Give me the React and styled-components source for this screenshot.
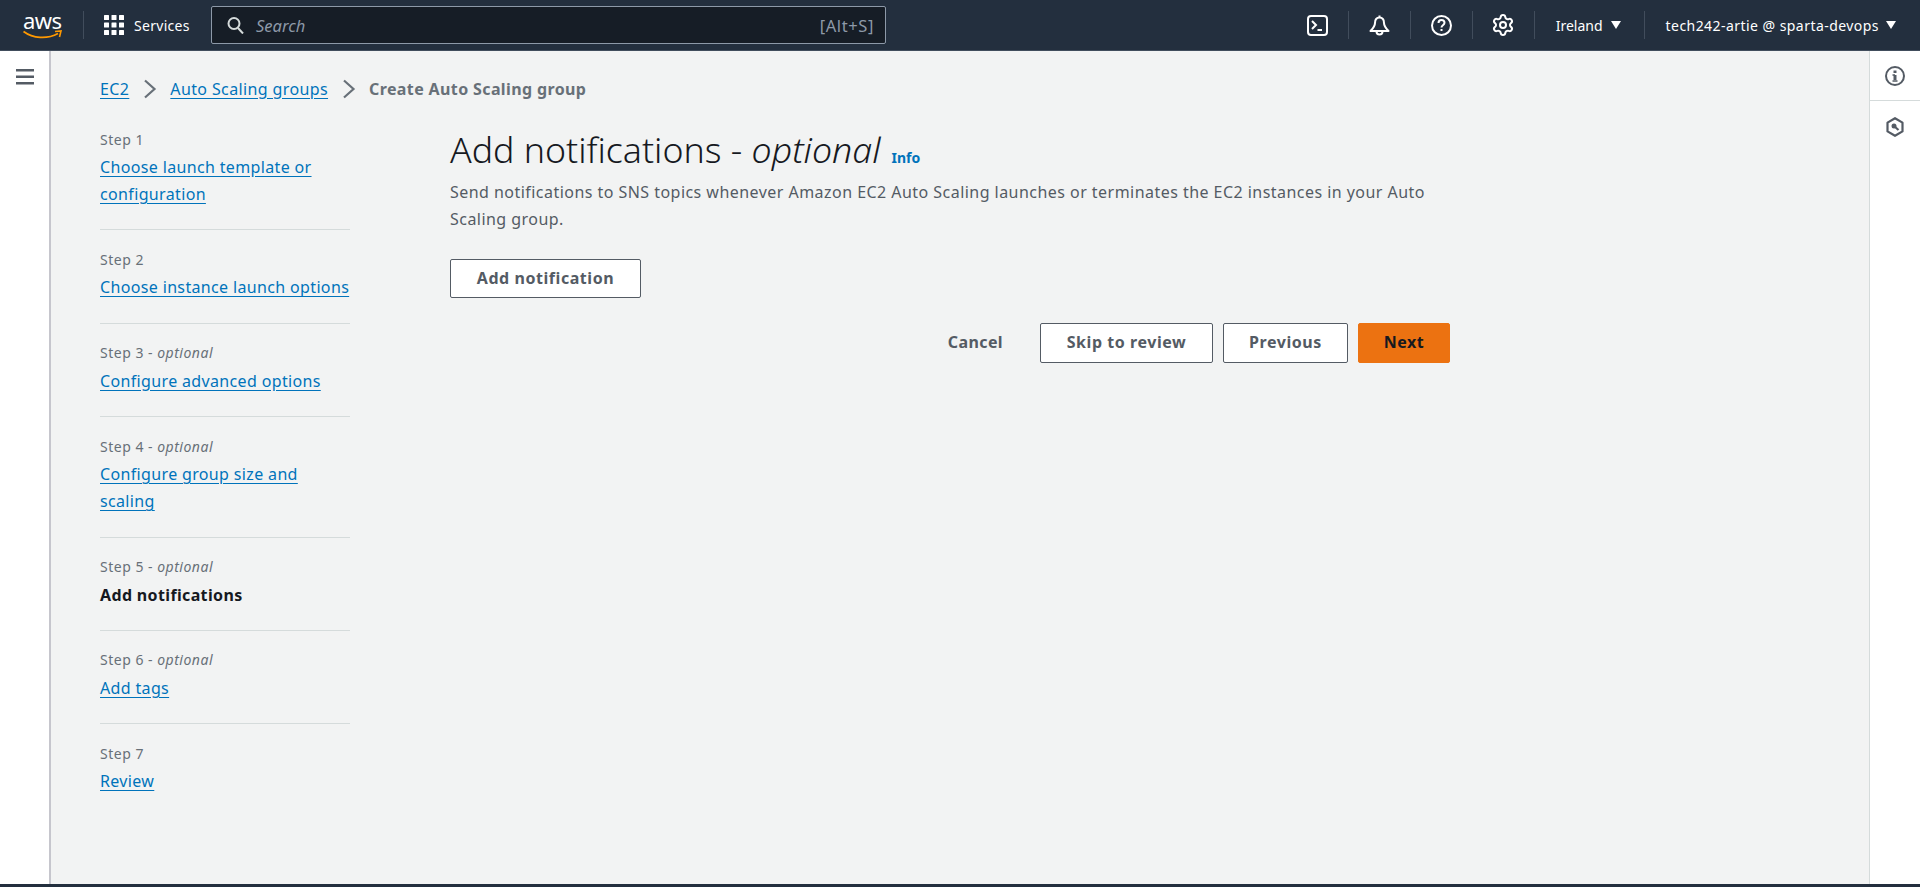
import React from 'react';
import styled, { createGlobalStyle } from 'styled-components';
import { Settings } from 'lucide-react';

const GlobalStyle = createGlobalStyle`
  html, body {
    margin: 0;
    padding: 0;
    height: 100%;
    overflow: hidden;
    background: #f2f3f3;
    font-family: "Noto Sans", "Open Sans", sans-serif;
    font-size: 16px;
  }
  * { box-sizing: border-box; }
`;

const steps = [
  { label: 'Step 1', title: 'Choose launch template or configuration' },
  { label: 'Step 2', title: 'Choose instance launch options' },
  { label: 'Step 3', optional: true, title: 'Configure advanced options' },
  { label: 'Step 4', optional: true, title: 'Configure group size and scaling' },
  { label: 'Step 5', optional: true, title: 'Add notifications', active: true },
  { label: 'Step 6', optional: true, title: 'Add tags' },
  { label: 'Step 7', title: 'Review' },
];

const Page = styled.div`
  display: flex;
  flex-direction: column;
  height: 887px;
`;

const TopBar = styled.header`
  flex: none;
  height: 51px;
  background: #232f3e;
  border-bottom: 1px solid #414d5c;
  display: flex;
  align-items: center;
  color: #fff;
`;

const Logo = styled.div`
  width: 83px;
  padding-left: 23px;
  display: flex;
  flex-direction: column;
  align-items: flex-start;
  height: 34px;
`;

const LogoText = styled.span`
  font-size: 22px;
  line-height: 24px;
  height: 22px;
  letter-spacing: -0.6px;
  color: #fff;
`;

const BarDivider = styled.span`
  flex: none;
  width: 1px;
  height: 28px;
  background: #414d5c;
`;

const ServicesMenu = styled.div`
  display: flex;
  align-items: center;
  gap: 10px;
  padding: 0 21px 0 20px;
  font-size: 14px;
  letter-spacing: 0.3px;
  width: 127px;
`;

const SearchBox = styled.div`
  width: 675px;
  height: 38px;
  background: #161d26;
  border: 1px solid #8d99a8;
  border-radius: 2px;
  display: flex;
  align-items: center;
  padding: 0 11px 0 15px;
  gap: 12px;
`;

const SearchText = styled.span`
  flex: 1;
  font-style: italic;
  font-size: 16.500px;
  color: #8d99a8;
`;

const Shortcut = styled.span`
  font-size: 16.500px;
  letter-spacing: 0.6px;
  color: #8d99a8;
`;

const BarRight = styled.div`
  margin-left: auto;
  display: flex;
  align-items: center;
`;

const IconCell = styled.div`
  width: 61px;
  display: flex;
  justify-content: center;
  align-items: center;
  height: 28px;
`;

const MenuCell = styled.div`
  display: flex;
  align-items: center;
  gap: ${p => p.$gap}px;
  font-size: 14px;
  letter-spacing: ${p => p.$spacing || 0}px;
  padding: 0 ${p => p.$right}px 0 21px;
`;

const Caret = styled.span`
  width: 0;
  height: 0;
  border-left: 5px solid transparent;
  border-right: 5px solid transparent;
  border-top: 8px solid #fff;
`;

const Body = styled.div`
  flex: 1;
  display: flex;
  min-height: 0;
`;

const LeftRail = styled.aside`
  flex: none;
  width: 51px;
  background: #fff;
  border-right: 2px solid #c6c6cd;
  padding: 17px 0 0 16px;
`;

const RightRail = styled.aside`
  flex: none;
  width: 51px;
  background: #fff;
  border-left: 1px solid #d5dbdb;
  display: flex;
  flex-direction: column;
`;

const RailButton = styled.div`
  height: ${p => p.$h}px;
  display: flex;
  align-items: center;
  justify-content: center;
  border-bottom: ${p => (p.$line ? '1px solid #d5dbdb' : 'none')};
`;

const Main = styled.main`
  flex: 1;
  padding: 24px 0 0 49px;
  min-width: 0;
`;

const Breadcrumbs = styled.nav`
  display: flex;
  align-items: center;
  height: 27px;
  font-size: 16px;
  letter-spacing: 0.38px;
`;

const Crumb = styled.a`
  color: #0073bb;
  text-decoration: underline;
  text-underline-offset: 3px;
`;

const CrumbCurrent = styled.span`
  color: #687078;
  font-weight: 700;
`;

const CrumbChevron = styled.svg`
  width: 14px;
  height: 20px;
  margin: 0 13px 0 14px;
  flex: none;
`;

const Columns = styled.div`
  display: grid;
  grid-template-columns: 250px 1000px;
  column-gap: 100px;
  margin-top: 8px;
`;

const StepList = styled.ol`
  list-style: none;
  margin: 0;
  padding: 0;
`;

const StepItem = styled.li`
  padding: 17.500px 0 ${p => (p.$last ? 0 : 21.4)}px;
  border-bottom: ${p => (p.$last ? 'none' : '1px solid #d5dbdb')};
`;

const StepLabel = styled.div`
  font-size: 14px;
  line-height: 24px;
  margin-bottom: 2.500px;
  letter-spacing: 0.5px;
  color: #687078;

  em {
    font-style: italic;
  }
`;

const StepLink = styled.a`
  font-size: 16px;
  line-height: 27px;
  letter-spacing: 0.35px;
  color: #0073bb;
  text-decoration: underline;
  text-underline-offset: 3px;
`;

const StepCurrent = styled.div`
  font-size: 16px;
  line-height: 27px;
  letter-spacing: 0.35px;
  font-weight: 700;
  color: #16191f;
`;

const Content = styled.section`
  padding-top: 18px;
`;

const HeadingRow = styled.div`
  display: flex;
  align-items: baseline;
  gap: 11px;
`;

const Heading = styled.h1`
  margin: 0;
  font-size: 35.700px;
  line-height: 42px;
  font-weight: 300;
  color: #16191f;

  em {
    font-style: italic;
  }
`;

const InfoLink = styled.a`
  font-size: 14px;
  font-weight: 700;
  color: #0073bb;
`;

const Description = styled.p`
  margin: 9px 0 0;
  font-size: 16px;
  line-height: 27px;
  letter-spacing: 0.46px;
  color: #545b64;
`;

const Button = styled.button`
  font-family: inherit;
  font-size: 16px;
  letter-spacing: 0.55px;
  font-weight: 700;
  height: ${p => p.$h || 40}px;
  width: ${p => p.$w}px;
  padding: 0 0 2px;
  border-radius: 2px;
  border: 1px solid ${p => (p.$primary ? '#ec7211' : '#545b64')};
  background: ${p => (p.$primary ? '#ec7211' : '#fff')};
  color: ${p => (p.$primary ? '#16191f' : '#545b64')};
`;

const AddRow = styled.div`
  margin-top: 26px;
`;

const Actions = styled.div`
  display: flex;
  justify-content: flex-end;
  align-items: center;
  gap: 10px;
  margin-top: 25px;
`;

const CancelLink = styled.a`
  font-size: 16px;
  letter-spacing: 0.4px;
  font-weight: 700;
  color: #545b64;
  margin-right: 27px;
  padding-bottom: 2px;
`;

const BottomStrip = styled.div`
  flex: none;
  height: 3px;
  background: #232f3e;
`;

const Chevron = () => (
  <CrumbChevron viewBox="0 0 14 20">
    <path d="M2 1.500l9.500 8.500-9.500 8.500" fill="none" stroke="#687078" strokeWidth="2.200" />
  </CrumbChevron>
);

const GridIcon = () => (
  <svg width="20" height="20" viewBox="0 0 20 20" fill="#fff">
    {[0, 7.5, 15].flatMap(y => [0, 7.5, 15].map(x => (
      <rect key={`${x}-${y}`} x={x} y={y} width="5" height="5" rx="0.5" />
    )))}
  </svg>
);

const SearchIcon = () => (
  <svg width="17" height="18" viewBox="0 0 17 18" fill="none" stroke="#d5dbdb" strokeWidth="2">
    <circle cx="7" cy="7.500" r="5.500" />
    <path d="M11 12l5 5.500" />
  </svg>
);

const TerminalIcon = () => (
  <svg width="21" height="21" viewBox="0 0 21 21" fill="none" stroke="#fff" strokeWidth="2">
    <rect x="1" y="1" width="19" height="19" rx="3" />
    <path d="M5 6l4 4-4 4M10.500 15H15" />
  </svg>
);

const BellIcon = () => (
  <svg width="21" height="21" viewBox="0 0 21 21" fill="none" stroke="#fff" strokeWidth="2">
    <path d="M10.500 .5v2M10.500 2.500c-3 0-4.500 2.500-4.500 5.500 0 3-1.500 5-4.500 8h18c-3-3-4.500-5-4.500-8 0-3-1.500-5.500-4.500-5.500z" strokeLinejoin="round" />
    <path d="M7.500 16.500a3 3 0 0 0 6 0" />
  </svg>
);

const HelpIcon = () => (
  <svg width="21" height="21" viewBox="0 0 21 21" fill="none" stroke="#fff" strokeWidth="2">
    <circle cx="10.500" cy="10.500" r="9.500" />
    <path d="M7.500 8c0-1.800 1.300-3 3-3s3 1.200 3 2.800c0 2.500-3 2.500-3 4.700" />
    <path d="M10.500 14v2" />
  </svg>
);

const Hamburger = () => (
  <svg width="18" height="16" viewBox="0 0 18 16" fill="#545b64">
    <rect y="0" width="18" height="2.500" />
    <rect y="6.500" width="18" height="2.500" />
    <rect y="13" width="18" height="2.500" />
  </svg>
);

const InfoIcon = () => (
  <svg width="20" height="20" viewBox="0 0 20 20" fill="none" stroke="#545b64" strokeWidth="2">
    <circle cx="10" cy="10" r="9" />
    <path d="M10 9v5" strokeWidth="3" />
    <path d="M7.500 15h5M7.500 9H10" strokeWidth="1.500" />
    <path d="M10 4.500V7" strokeWidth="3" />
  </svg>
);

const HexIcon = () => (
  <svg width="20" height="20" viewBox="0 0 20 20" fill="none" stroke="#545b64" strokeWidth="2.200">
    <path d="M10 1.200l7.500 4.400v8.800L10 18.800l-7.500-4.400V5.600z" strokeLinejoin="round" />
    <circle cx="9" cy="9" r="2.500" fill="#545b64" stroke="none" />
    <path d="M9 9l4.500 4" />
  </svg>
);

const Smile = () => (
  <svg width="40" height="10" viewBox="0 0 40 10" fill="none">
    <path d="M0.500 1.500C10 8.500 24 9.500 35 3.500" stroke="#ff9900" strokeWidth="1.800" />
    <path d="M32 1.500l6-.5-1.500 6" stroke="#ff9900" strokeWidth="1.600" />
  </svg>
);

export default function App() {
  return (
    <Page>
      <GlobalStyle />
      <TopBar>
        <Logo>
          <LogoText>aws</LogoText>
          <Smile />
        </Logo>
        <BarDivider />
        <ServicesMenu>
          <GridIcon />
          <span>Services</span>
        </ServicesMenu>
        <SearchBox>
          <SearchIcon />
          <SearchText>Search</SearchText>
          <Shortcut>[Alt+S]</Shortcut>
        </SearchBox>
        <BarRight>
          <IconCell><TerminalIcon /></IconCell>
          <BarDivider />
          <IconCell><BellIcon /></IconCell>
          <BarDivider />
          <IconCell><HelpIcon /></IconCell>
          <BarDivider />
          <IconCell><Settings size={24} color="#fff" strokeWidth={2} /></IconCell>
          <BarDivider />
          <MenuCell $right={23} $gap={8}>Ireland <Caret /></MenuCell>
          <BarDivider />
          <MenuCell $right={24} $gap={7} $spacing={0.45}>tech242-artie @ sparta-devops <Caret /></MenuCell>
        </BarRight>
      </TopBar>
      <Body>
        <LeftRail><Hamburger /></LeftRail>
        <Main>
          <Breadcrumbs>
            <Crumb>EC2</Crumb>
            <Chevron />
            <Crumb>Auto Scaling groups</Crumb>
            <Chevron />
            <CrumbCurrent>Create Auto Scaling group</CrumbCurrent>
          </Breadcrumbs>
          <Columns>
            <StepList>
              {steps.map((step, i) => (
                <StepItem key={step.label} $last={i === steps.length - 1}>
                  <StepLabel>
                    {step.label}{step.optional && <> - <em>optional</em></>}
                  </StepLabel>
                  {step.active
                    ? <StepCurrent>{step.title}</StepCurrent>
                    : <StepLink>{step.title}</StepLink>}
                </StepItem>
              ))}
            </StepList>
            <Content>
              <HeadingRow>
                <Heading>Add notifications - <em>optional</em></Heading>
                <InfoLink>Info</InfoLink>
              </HeadingRow>
              <Description>
                Send notifications to SNS topics whenever Amazon EC2 Auto Scaling launches or terminates the EC2 instances in your Auto Scaling group.
              </Description>
              <AddRow>
                <Button $w={191} $h={39}>Add notification</Button>
              </AddRow>
              <Actions>
                <CancelLink>Cancel</CancelLink>
                <Button $w={173}>Skip to review</Button>
                <Button $w={125}>Previous</Button>
                <Button $w={92} $primary>Next</Button>
              </Actions>
            </Content>
          </Columns>
        </Main>
        <RightRail>
          <RailButton $h={50} $line><InfoIcon /></RailButton>
          <RailButton $h={52}><HexIcon /></RailButton>
        </RightRail>
      </Body>
      <BottomStrip />
    </Page>
  );
}
